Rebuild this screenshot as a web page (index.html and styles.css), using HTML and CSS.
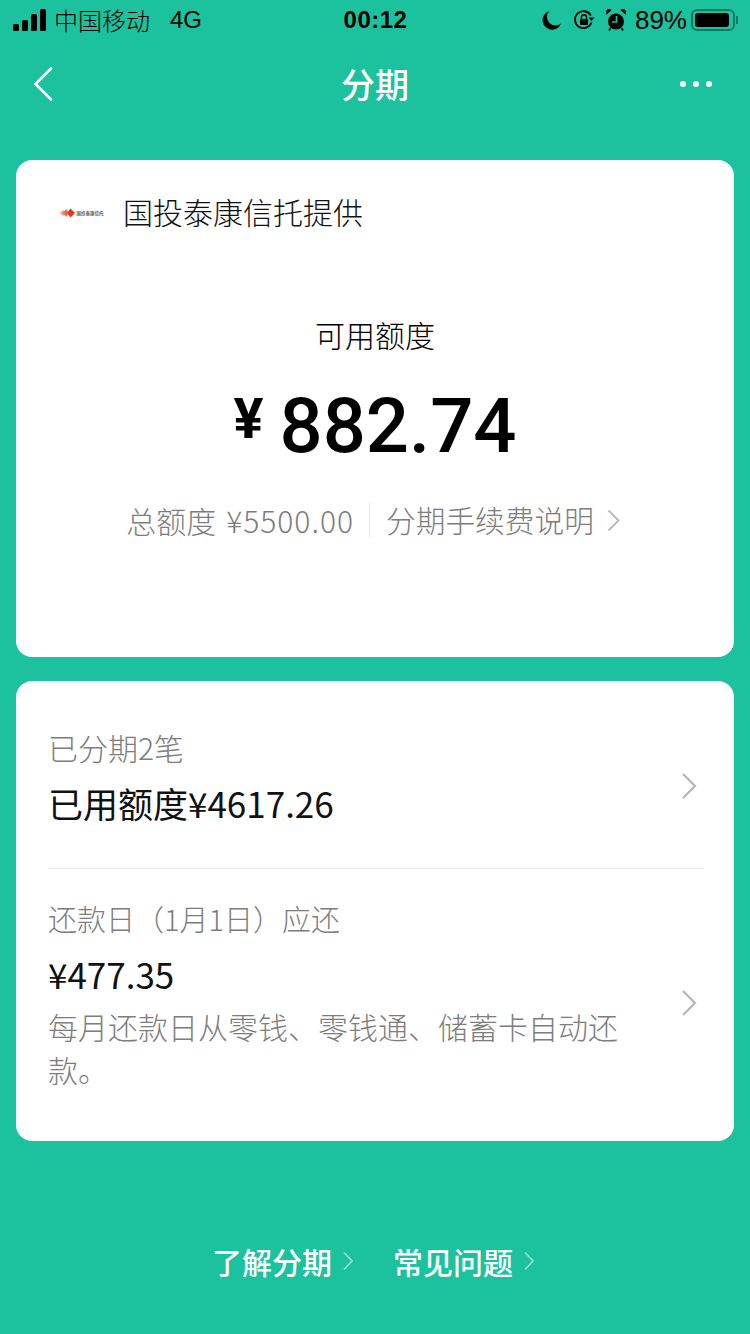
FILE: index.html
```html
<!DOCTYPE html>
<html lang="zh-CN">
<head>
  <meta charset="UTF-8">
  <title>分期</title>
  <link rel="stylesheet" href="styles.css">
</head>
<body>
  <div class="status-bar">
    <div class="status-left">
      <svg class="signal" width="34" height="22" viewBox="0 0 34 22">
        <rect x="0" y="15" width="6" height="7" rx="1.5"/>
        <rect x="9" y="11" width="6" height="11" rx="1.5"/>
        <rect x="18" y="5" width="6" height="17" rx="1.5"/>
        <rect x="27" y="0" width="6" height="22" rx="1.5"/>
      </svg>
      <span class="carrier">中国移动</span>
      <span class="network">4G</span>
    </div>
    <div class="status-time">00:12</div>
    <div class="status-right">
      <svg class="icon-moon" width="20" height="20" viewBox="0 0 20 20"><path d="M7.5 1a9.5 9.5 0 1 0 11.5 12.5 8.5 8.5 0 0 1-11.5-12.5z"/></svg>
      <svg class="icon-lock" width="22" height="22" viewBox="0 0 22 22"><path d="M18.5 13.5a8.500 8.500 0 1 1-.6-7" fill="none" stroke="#000" stroke-width="1.8"/><path d="M15.5 8.5h6l-3 3.6z"/><rect x="7" y="10" width="8" height="6" rx="1"/><path d="M8.5 10V8.300a2.500 2.500 0 0 1 5 0V10" fill="none" stroke="#000" stroke-width="1.4"/></svg>
      <svg width="20" height="22" viewBox="0 0 20 22"><circle cx="10" cy="12.500" r="8"/><path d="M.6 5.500 5.500 1.200A3 3 0 0 0 .6 5.500zM19.400 5.500 14.500 1.200a3 3 0 0 1 4.900 4.300z"/><path d="M4.500 19 3 21.500M15.500 19l1.500 2.500" stroke="#000" stroke-width="1.6"/><path d="M10.500 7v6H6" fill="none" stroke="#1bc29d" stroke-width="1.6"/></svg>
      <span class="battery-text">89%</span>
      <div class="battery"><div class="battery-fill"></div></div>
      <div class="battery-cap"></div>
    </div>
  </div>

  <div class="nav-bar">
    <svg class="back" width="20" height="34" viewBox="0 0 20 34"><path d="M18 1.500 2.500 17 18 32.500" fill="none" stroke="#fff" stroke-width="2.6" stroke-linecap="round"/></svg>
    <h1 class="nav-title">分期</h1>
    <div class="more"><i></i><i></i><i></i></div>
  </div>

  <section class="card quota-card">
    <div class="provider">
      <div class="logo">
        <svg width="15" height="10" viewBox="0 0 15 10"><path d="M0 5l3-3 3 3-3 3z" fill="#f4a08c"/><path d="M3 5l3-4 3 4-3 4z" fill="#ee6a50"/><path d="M7 5l3.500-4.500L15 5l-4.500 4.500z" fill="#e5381f"/></svg>
        <span class="logo-text">国投泰康信托</span>
      </div>
      <span class="provider-name">国投泰康信托提供</span>
    </div>
    <div class="quota-label">可用额度</div>
    <div class="quota-amount"><span class="yen">¥</span><span>882.74</span></div>
    <div class="quota-meta">
      <span class="total">总额度<span class="total-amount">¥5500.00</span></span>
      <span class="meta-link">分期手续费说明
        <svg width="13" height="23" viewBox="0 0 13 23"><path d="M1.500 1.500 11.500 11.500 1.500 21.500" fill="none" stroke="#bbb" stroke-width="2"/></svg>
      </span>
    </div>
  </section>

  <section class="card detail-card">
    <div class="detail-row used-row">
      <div class="detail-text">
        <div class="muted">已分期2笔</div>
        <div class="value">已用额度¥4617.26</div>
      </div>
      <svg class="chevron" width="16" height="28" viewBox="0 0 16 28"><path d="M2 2 14 14 2 26" fill="none" stroke="#b5b5b5" stroke-width="2.200"/></svg>
    </div>
    <div class="detail-row repay-row">
      <div class="detail-text">
        <div class="muted">还款日（1月1日）应还</div>
        <div class="value">¥477.35</div>
        <div class="note">每月还款日从零钱、零钱通、储蓄卡自动还款。</div>
      </div>
      <svg class="chevron" width="16" height="28" viewBox="0 0 16 28"><path d="M2 2 14 14 2 26" fill="none" stroke="#b5b5b5" stroke-width="2.200"/></svg>
    </div>
  </section>

  <footer class="links">
    <a class="link">了解分期
      <svg width="10" height="20" viewBox="0 0 10 20"><path d="M1 1.500 9 10 1 18.500" fill="none" stroke="#8fdfcd" stroke-width="1.800"/></svg>
    </a>
    <a class="link">常见问题
      <svg width="10" height="20" viewBox="0 0 10 20"><path d="M1 1.500 9 10 1 18.500" fill="none" stroke="#8fdfcd" stroke-width="1.800"/></svg>
    </a>
  </footer>
</body>
</html>
```

FILE: styles.css
```css
* {
  box-sizing: border-box;
}
body {
  margin: 0;
  width: 750px;
  height: 1334px;
  overflow: hidden;
  background-color: #1bc29d;
  font-family: "Noto Sans CJK SC", "Liberation Sans", sans-serif;
  color: #000;
}
.status-bar {
  display: grid;
  grid-template-columns: 1fr auto 1fr;
  align-items: center;
  height: 40px;
  padding: 0 12px 0 13px;
  font-family: "Liberation Sans", "Noto Sans CJK SC", sans-serif;
}
.status-left {
  display: flex;
  align-items: center;
  font-size: 24px;
}
.signal {
  margin-right: 7px;
}
.carrier {
  font-family: "Noto Sans CJK SC", sans-serif;
  font-weight: 300;
  font-size: 24px;
  margin-right: 20px;
  margin-top: -2px;
}
.status-time {
  font-size: 24px;
  font-weight: bold;
  letter-spacing: 0.5px;
}
.status-right {
  display: flex;
  align-items: center;
  justify-content: flex-end;
  gap: 9px;
}
.icon-moon,
.icon-lock {
  margin-right: 2px;
}
.battery-text {
  font-size: 26px;
  margin-right: -5px;
}
.battery {
  width: 44px;
  height: 22px;
  border: 2px solid #0f7a64;
  border-radius: 6px;
  padding: 2px;
}
.battery-fill {
  width: 34px;
  height: 14px;
  background: #000;
  border-radius: 3px;
}
.battery-cap {
  width: 2px;
  height: 8px;
  background: #0f7a64;
  margin-left: -8px;
}
.nav-bar {
  display: grid;
  grid-template-columns: 1fr auto 1fr;
  align-items: center;
  height: 88px;
  padding: 0 38px;
}
.back {
  margin-left: -5px;
}
.nav-title {
  margin: 0 0 2px;
  color: #fff;
  font-size: 34px;
  font-weight: 500;
}
.more {
  display: flex;
  justify-content: flex-end;
  gap: 7px;
}
.more i {
  width: 6px;
  height: 6px;
  background: #fff;
  border-radius: 50%;
}
.card {
  background: #fff;
  border-radius: 16px;
  margin: 0 16px;
}
.quota-card {
  height: 497px;
  margin-top: 32px;
  padding-top: 30px;
  text-align: center;
}
.provider {
  display: flex;
  align-items: center;
  padding-left: 44px;
  height: 42px;
}
.logo {
  display: flex;
  align-items: center;
  width: 63px;
  gap: 1px;
  margin-top: 4px;
}
.logo-text {
  font-size: 4.500px;
  color: #666;
  white-space: nowrap;
  width: 28px;
  font-weight: 700;
}
.provider-name {
  font-size: 30px;
  color: #111;
  font-weight: 300;
}
.quota-label {
  margin-top: 81px;
  font-size: 30px;
  line-height: 42px;
  font-weight: 300;
}
.quota-amount {
  display: flex;
  justify-content: center;
  align-items: center;
  margin-top: 28px;
  height: 86px;
  font-family: Roboto, "Liberation Sans", sans-serif;
  font-size: 76px;
  font-weight: 500;
  gap: 16px;
}
.yen {
  font-size: 56px;
  font-weight: 700;
  margin-top: -14px;
}
.quota-meta {
  display: flex;
  justify-content: center;
  align-items: center;
  margin-top: 33px;
  padding-right: 4px;
  color: #7d7d7d;
  font-size: 30px;
  font-weight: 300;
  line-height: 36px;
}
.total {
  padding-right: 15px;
  border-right: 1px solid #e8e8e8;
}
.total-amount {
  margin-left: 10px;
  letter-spacing: 1px;
}
.meta-link {
  display: flex;
  align-items: center;
  gap: 13px;
  padding-left: 16px;
  font-size: 29.700px;
}
.detail-card {
  height: 460px;
  margin-top: 24px;
  padding: 0 31px 0 32px;
}
.detail-row {
  display: flex;
  align-items: center;
  justify-content: space-between;
}
.used-row {
  height: 188px;
  border-bottom: 1px solid #e9e9e9;
}
.used-row .chevron {
  margin-top: 22px;
}
.repay-row {
  height: 271px;
}
.repay-row .detail-text {
  align-self: flex-start;
  padding-top: 28px;
}
.repay-row .muted {
  font-size: 29px;
}
.repay-row .chevron {
  margin-bottom: 4px;
}
.detail-text {
  width: 580px;
}
.muted {
  color: #7d7d7d;
  font-size: 30px;
  font-weight: 300;
  line-height: 42px;
}
.value {
  margin-top: 14px;
  font-size: 35px;
  font-weight: 400;
  line-height: 42px;
  color: #111;
}
.note {
  margin-top: 10px;
  color: #7d7d7d;
  font-size: 30px;
  font-weight: 300;
  line-height: 43px;
}
.chevron {
  margin-right: 6px;
}
.links {
  display: flex;
  justify-content: center;
  gap: 40px;
  margin-top: 98px;
  padding-right: 4px;
}
.link {
  display: flex;
  align-items: center;
  gap: 11px;
  color: #fff;
  font-size: 30px;
  font-weight: 500;
}
```
